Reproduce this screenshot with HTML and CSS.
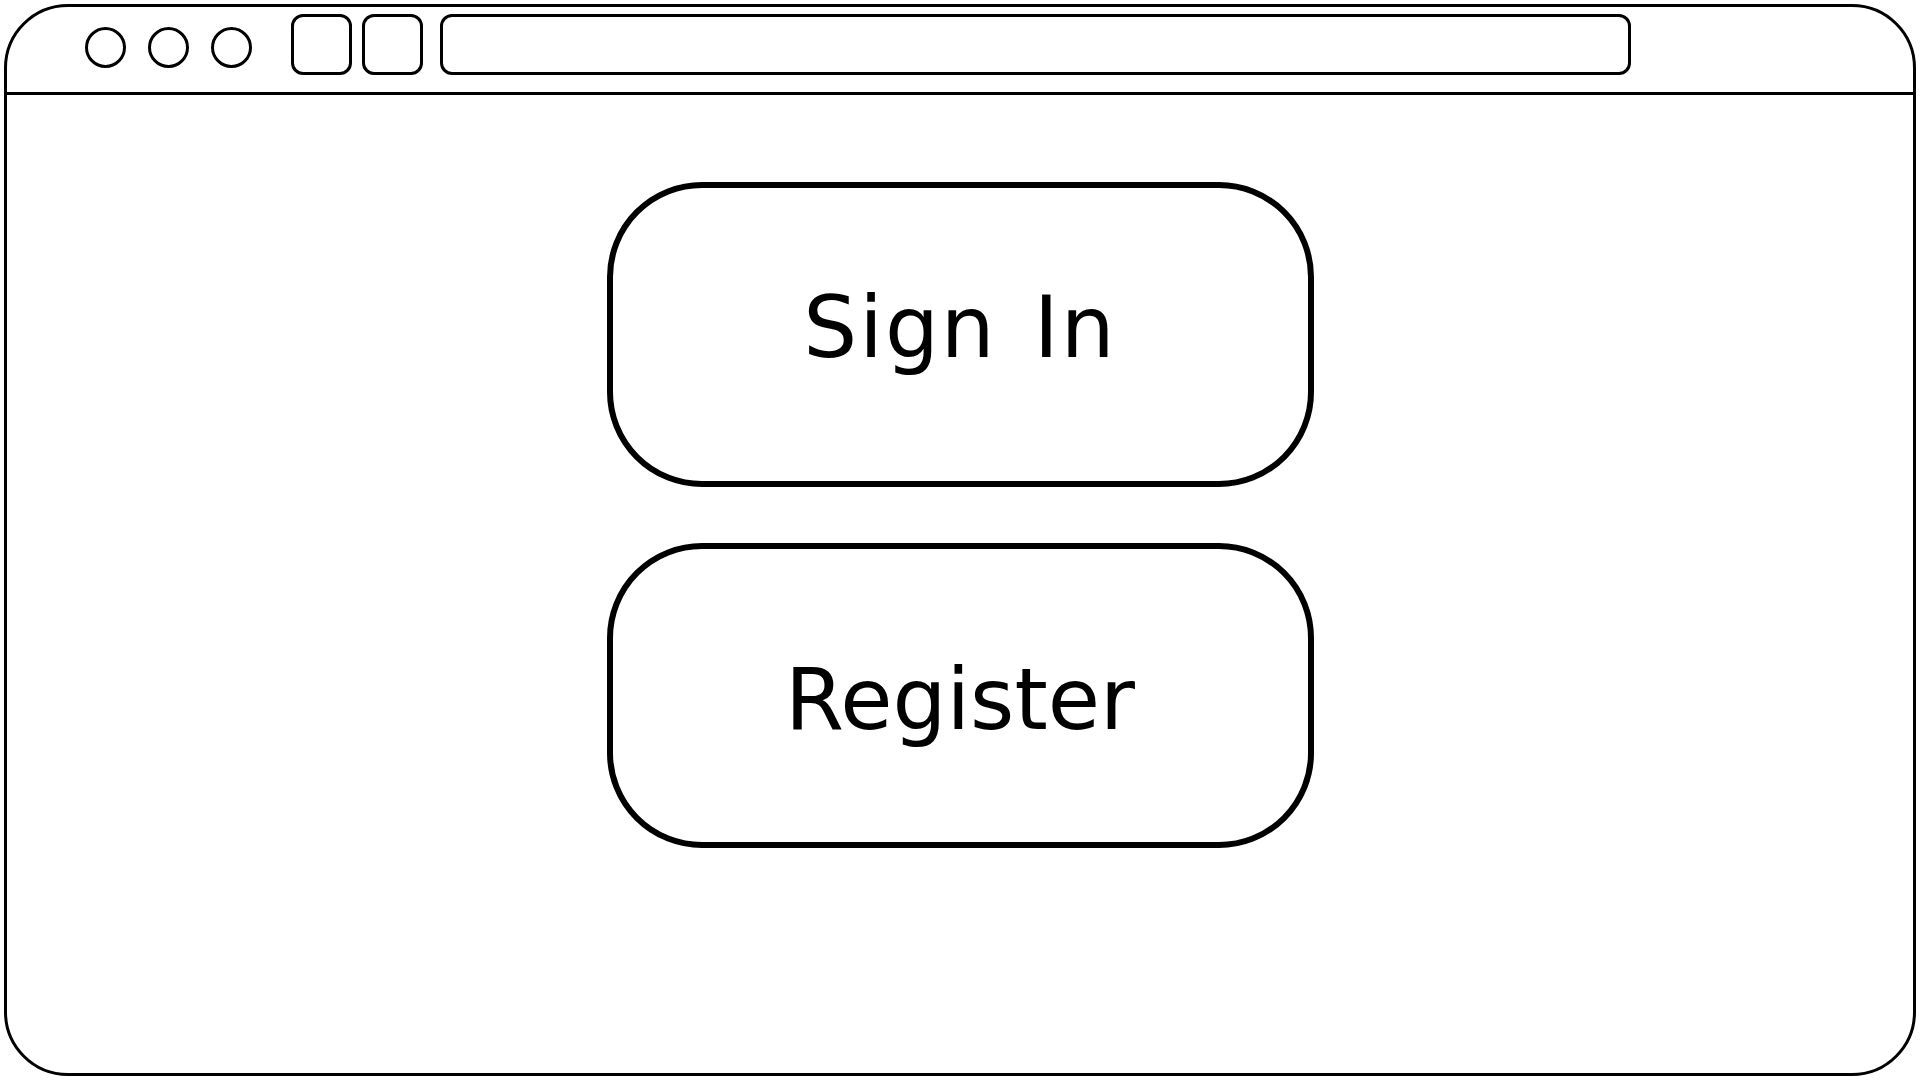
FILE: index.html
```html
<!DOCTYPE html>
<html lang="en">
<head>
<meta charset="utf-8">
<title>Welcome</title>
<link rel="stylesheet" href="styles.css">
</head>
<body>
<div class="window">
  <header class="toolbar">
    <div class="lights">
      <span class="light"></span>
      <span class="light"></span>
      <span class="light"></span>
    </div>
    <div class="nav">
      <span class="nav-btn"></span>
      <span class="nav-btn"></span>
    </div>
    <div class="address"></div>
  </header>
  <main class="content">
    <button class="action action-signin" type="button">Sign In</button>
    <button class="action action-register" type="button">Register</button>
  </main>
</div>
</body>
</html>
```

FILE: styles.css
```css
* {
  box-sizing: border-box;
}

html, body {
  margin: 0;
  padding: 0;
  background: #ffffff;
}

body {
  width: 1920px;
  height: 1080px;
  padding: 4px 4px 0 4px;
  font-family: Verdana, "DejaVu Sans", sans-serif;
  color: #000;
}

.window {
  width: 1912px;
  height: 1072px;
  border: 3px solid #000;
  border-radius: 64px;
  display: flex;
  flex-direction: column;
  overflow: hidden;
}

.toolbar {
  height: 88px;
  flex: 0 0 88px;
  border-bottom: 3px solid #000;
  display: flex;
  align-items: flex-start;
  padding: 7px 0 0 78px;
}

.lights {
  display: flex;
  gap: 22px;
  margin-top: 13px;
}

.light {
  width: 41px;
  height: 41px;
  border: 3px solid #000;
  border-radius: 50%;
}

.nav {
  display: flex;
  gap: 10px;
  margin-left: 39px;
}

.nav-btn {
  width: 61px;
  height: 61px;
  border: 3px solid #000;
  border-radius: 12px;
}

.address {
  margin-left: 17px;
  width: 1191px;
  height: 61px;
  border: 3px solid #000;
  border-radius: 12px;
}

.content {
  flex: 1;
  display: flex;
  flex-direction: column;
  align-items: center;
  padding-top: 87px;
  gap: 56px;
}

.action {
  width: 707px;
  height: 305px;
  border: 6px solid #000;
  border-radius: 95px;
  background: #fff;
  font-family: Verdana, "DejaVu Sans", sans-serif;
  font-size: 85px;
  line-height: 1;
  color: #000;
  padding: 0;
  margin: 0;
  cursor: pointer;
}

.action-signin {
  word-spacing: 8px;
  letter-spacing: 2px;
  padding-bottom: 14px;
}

.action-register {
  padding-top: 8px;
}
```
